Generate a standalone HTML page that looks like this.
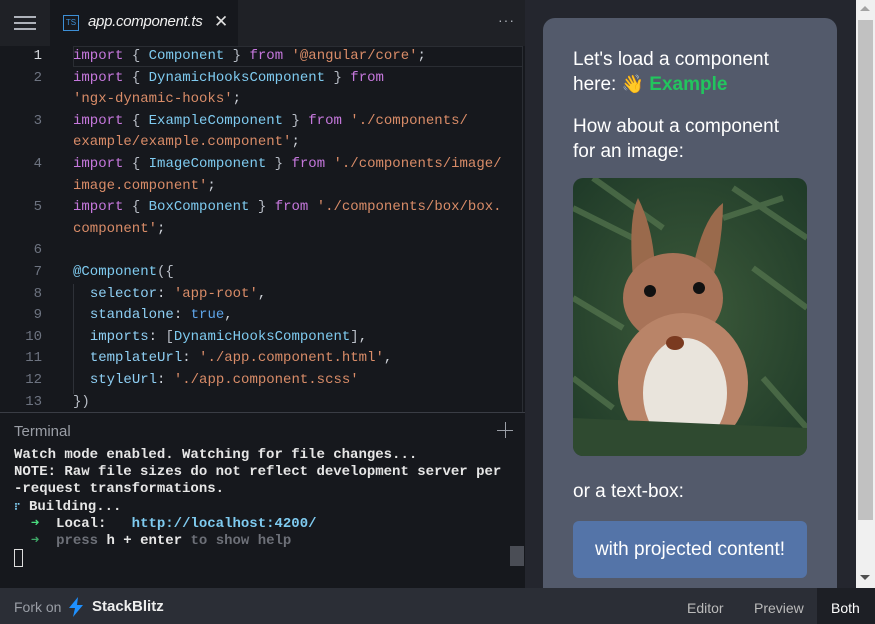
<!DOCTYPE html>
<html><head><style>
*{margin:0;padding:0;box-sizing:border-box}
body{width:875px;height:624px;overflow:hidden;background:#24262e;font-family:"Liberation Sans",sans-serif;position:relative}
.mono{font-family:"Liberation Mono",monospace}
#tabs{position:absolute;left:0;top:0;width:525px;height:46px;background:#1f2126}
#tab{position:absolute;left:50px;top:0;width:188px;height:46px;background:#16181d}
#ed{position:absolute;left:0;top:46px;width:525px;height:366px;background:#16181d}
.ln{position:absolute;left:0;width:42px;text-align:right;color:#6d7380;font-size:14px}
.cl{position:absolute;left:73px;font-size:14px;white-space:pre;color:#cfd3da}
.k{color:#c678dd}.c{color:#7fcbf0}.s{color:#d98c68}.p{color:#b8bdc6}.b{color:#5ea4e8}.pr{color:#8fd0f5}
#term{position:absolute;left:0;top:412px;width:525px;height:176px;background:#16181d;border-top:1px solid #3a3d45}
.tl{position:absolute;left:14px;font-size:14px;font-weight:bold;color:#e6e6e6;white-space:pre}
#bot{position:absolute;left:0;top:588px;width:875px;height:36px;background:#2b2e36}
#card{position:absolute;left:543px;top:18px;width:294px;height:575px;background:#535a6b;border-radius:12px 12px 0 0}
.txt{position:absolute;left:573px;color:#fff;font-size:19px;line-height:25px}
</style></head><body>
<div id="tabs">
 <div style="position:absolute;left:14px;top:16px;width:22px;height:2px;background:#aeb2ba;box-shadow:0 6px 0 #aeb2ba,0 12px 0 #aeb2ba"></div>
 <div id="tab">
  <div style="position:absolute;left:13px;top:15px;width:16px;height:16px;border:1px solid #3d8fd6;color:#3d8fd6;font-size:8px;line-height:14px;text-align:center">TS</div>
  <div style="position:absolute;left:38px;top:13px;color:#f0f0f0;font-size:15px;font-style:italic;letter-spacing:-0.3px">app.component.ts</div>
  <div style="position:absolute;left:164px;top:12px;color:#e0e0e0;font-size:17px">✕</div>
 </div>
 <div style="position:absolute;left:498px;top:12px;color:#aeb2ba;font-size:14px;letter-spacing:1px">···</div>
</div>
<div id="ed" class="mono">
 <div style="position:absolute;left:73px;top:0;width:450px;height:21px;border:1px solid #2a2d33"></div>
 <div style="position:absolute;left:522px;top:0;width:1px;height:366px;background:#2a2d33"></div>
 <div style="position:absolute;left:73px;top:238px;width:1px;height:110px;background:#2e3138"></div>
</div>
<div id="code" class="mono" style="position:absolute;left:0;top:46px;line-height:21.6px">
<div class="ln" style="top:0;color:#d8dbe0">1</div><div class="cl" style="top:0"><span class="k">import</span> <span class="p">{</span> <span class="c">Component</span> <span class="p">}</span> <span class="k">from</span> <span class="s">'@angular/core'</span>;</div>
<div class="ln" style="top:21.6px">2</div><div class="cl" style="top:21.6px"><span class="k">import</span> <span class="p">{</span> <span class="c">DynamicHooksComponent</span> <span class="p">}</span> <span class="k">from</span></div>
<div class="cl" style="top:43.2px"><span class="s">'ngx-dynamic-hooks'</span>;</div>
<div class="ln" style="top:64.8px">3</div><div class="cl" style="top:64.8px"><span class="k">import</span> <span class="p">{</span> <span class="c">ExampleComponent</span> <span class="p">}</span> <span class="k">from</span> <span class="s">'./components/</span></div>
<div class="cl" style="top:86.4px"><span class="s">example/example.component'</span>;</div>
<div class="ln" style="top:108px">4</div><div class="cl" style="top:108px"><span class="k">import</span> <span class="p">{</span> <span class="c">ImageComponent</span> <span class="p">}</span> <span class="k">from</span> <span class="s">'./components/image/</span></div>
<div class="cl" style="top:129.6px"><span class="s">image.component'</span>;</div>
<div class="ln" style="top:151.2px">5</div><div class="cl" style="top:151.2px"><span class="k">import</span> <span class="p">{</span> <span class="c">BoxComponent</span> <span class="p">}</span> <span class="k">from</span> <span class="s">'./components/box/box.</span></div>
<div class="cl" style="top:172.8px"><span class="s">component'</span>;</div>
<div class="ln" style="top:194.4px">6</div>
<div class="ln" style="top:216px">7</div><div class="cl" style="top:216px"><span class="c">@Component</span><span class="p">({</span></div>
<div class="ln" style="top:237.6px">8</div><div class="cl" style="top:237.6px">  <span class="pr">selector</span>: <span class="s">'app-root'</span>,</div>
<div class="ln" style="top:259.2px">9</div><div class="cl" style="top:259.2px">  <span class="pr">standalone</span>: <span class="b">true</span>,</div>
<div class="ln" style="top:280.8px">10</div><div class="cl" style="top:280.8px">  <span class="pr">imports</span>: <span class="p">[</span><span class="c">DynamicHooksComponent</span><span class="p">]</span>,</div>
<div class="ln" style="top:302.4px">11</div><div class="cl" style="top:302.4px">  <span class="pr">templateUrl</span>: <span class="s">'./app.component.html'</span>,</div>
<div class="ln" style="top:324px">12</div><div class="cl" style="top:324px">  <span class="pr">styleUrl</span>: <span class="s">'./app.component.scss'</span></div>
<div class="ln" style="top:345.6px">13</div><div class="cl" style="top:345.6px"><span class="p">})</span></div>
</div>
<div id="term" class="mono">
 <div style="position:absolute;left:14px;top:10px;color:#9a9ea6;font-size:15px;font-family:'Liberation Sans',sans-serif">Terminal</div>
 <div style="position:absolute;left:497px;top:17px;width:16px;height:1px;background:#9a9ea6"></div>
 <div style="position:absolute;left:505px;top:9px;width:1px;height:16px;background:#9a9ea6"></div>
 <div style="position:absolute;left:510px;top:133px;width:14px;height:20px;background:#4a4d55"></div>
 <div style="line-height:17.2px">
 <div class="tl" style="top:34px">Watch mode enabled. Watching for file changes...</div>
 <div class="tl" style="top:51.2px">NOTE: Raw file sizes do not reflect development server per</div>
 <div class="tl" style="top:68.4px">-request transformations.</div>
 <div class="tl" style="top:85.6px"><span style="color:#7fcbf0;font-size:9px">⠏</span> Building...</div>
 <div class="tl" style="top:102.8px">  <span style="color:#4ade80">➜</span>  Local:   <span style="color:#7fcbf0">http://localhost:4200/</span></div>
 <div class="tl" style="top:120px">  <span style="color:#3fa868">➜</span>  <span style="color:#6d7078">press</span> h + enter <span style="color:#6d7078">to show help</span></div>
 <div style="position:absolute;left:14px;top:136px;width:9px;height:18px;border:1px solid #ddd"></div>
 </div>
</div>
<div id="card"></div>
<div class="txt" style="top:47px">Let's load a component<br>here: <span style="font-size:18px">👋</span> <b style="color:#22c55e">Example</b></div>
<div class="txt" style="top:114px">How about a component<br>for an image:</div>
<svg style="position:absolute;left:573px;top:178px" width="234" height="278" viewBox="0 0 234 278">
 <defs><clipPath id="r"><rect width="234" height="278" rx="10"/></clipPath>
 <radialGradient id="bg" cx="50%" cy="50%" r="70%"><stop offset="0" stop-color="#3c5a3a"/><stop offset="1" stop-color="#1f3a28"/></radialGradient></defs>
 <g clip-path="url(#r)">
 <rect width="234" height="278" fill="url(#bg)"/>
 <path d="M0 30 L60 60 M20 0 L90 50 M160 10 L234 60 M180 90 L234 130 M0 120 L50 150 M0 200 L40 230 M190 200 L234 250 M150 40 L210 20" stroke="#5e7f55" stroke-width="6" opacity=".6"/>
 <path d="M60 100 Q55 40 65 20 Q80 50 82 90 Z" fill="#9a6a4c"/>
 <path d="M120 90 Q130 40 150 25 Q150 60 140 100 Z" fill="#9a6a4c"/>
 <ellipse cx="100" cy="120" rx="50" ry="45" fill="#a87358"/>
 <ellipse cx="110" cy="205" rx="65" ry="70" fill="#b98468"/>
 <ellipse cx="112" cy="215" rx="42" ry="55" fill="#e9e4dc"/>
 <circle cx="77" cy="113" r="6" fill="#111"/><circle cx="126" cy="110" r="6" fill="#111"/>
 <ellipse cx="102" cy="165" rx="9" ry="7" fill="#7a3a20"/>
 <path d="M0 240 L234 250 L234 278 L0 278Z" fill="#2f4a30"/>
 </g>
</svg>
<div class="txt" style="top:479px">or a text-box:</div>
<div style="position:absolute;left:573px;top:521px;width:234px;height:57px;background:#5474a8;border-radius:6px;color:#fff;font-size:19px;line-height:57px;text-align:center">with projected content!</div>
<div style="position:absolute;left:856px;top:0;width:19px;height:588px;background:#f0f0f0"></div>
<div style="position:absolute;left:858px;top:20px;width:15px;height:500px;background:#c1c1c1"></div>
<div style="position:absolute;left:860px;top:6px;border:5px solid transparent;border-bottom:5px solid #a3a3a3;border-top:0"></div>
<div style="position:absolute;left:860px;top:575px;border:5px solid transparent;border-top:5px solid #505050;border-bottom:0"></div>
<div id="bot">
 <div style="position:absolute;left:14px;top:11px;color:#9a9ea6;font-size:14px">Fork on</div>
 <svg style="position:absolute;left:68px;top:9px" width="16" height="20" viewBox="0 0 16 20"><path d="M10 0 L1 11 H7 L5 20 L15 8 H9 Z" fill="#1e90ff"/></svg>
 <div style="position:absolute;left:92px;top:10px;color:#eee;font-size:15px;font-weight:bold">StackBlitz</div>
 <div style="position:absolute;left:687px;top:12px;color:#bbb;font-size:14px">Editor</div>
 <div style="position:absolute;left:754px;top:12px;color:#bbb;font-size:14px">Preview</div>
 <div style="position:absolute;left:817px;top:0;width:58px;height:36px;background:#1d1f25"></div>
 <div style="position:absolute;left:831px;top:12px;color:#fff;font-size:14px">Both</div>
</div>
</body></html>
